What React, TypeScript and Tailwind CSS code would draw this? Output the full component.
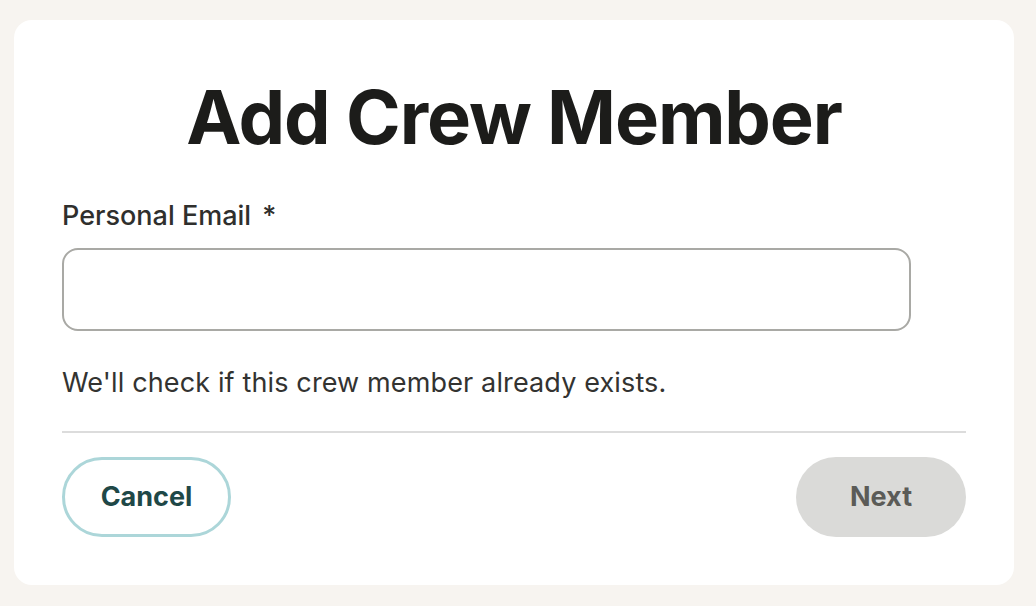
const App = () => {
  return (
    <div className="min-h-screen w-full bg-[#f7f4f0] pt-[20px] px-[14px] font-['Inter',sans-serif]">
      <div className="w-[1000px] h-[565px] rounded-[18px] bg-white px-[48px] pt-[60px] pb-[48px] flex flex-col">
        <h1 className="text-center text-[74px] leading-none font-bold text-[#1c1c1a] tracking-[-0.015em]">
          Add Crew Member
        </h1>
        <label className="mt-[46px] text-[27px] leading-[32px] font-medium text-[#2f2f2d]">
          Personal Email <span className="ml-1">*</span>
        </label>
        <input
          type="email"
          className="mt-[16px] w-[849px] h-[84px] rounded-[16px] border-2 border-[#a9a9a5] px-5 text-[26px] outline-none"
        />
        <p className="mt-[36px] text-[27px] leading-[32px] tracking-[0.005em] text-[#333331]">
          We'll check if this crew member already exists.
        </p>
        <div className="mt-[32px] h-[2px] w-full bg-[#dcdcdc]" />
        <div className="mt-[24px] flex items-center justify-between">
          <button className="w-[169px] h-[80px] rounded-full border-[3px] border-[#acd6d9] text-[27px] font-bold text-[#1f4847]">
            Cancel
          </button>
          <button className="w-[170px] h-[80px] rounded-full bg-[#dadad8] text-[27px] font-bold text-[#5b5b57]">
            Next
          </button>
        </div>
      </div>
    </div>
  );
};

export default App;
